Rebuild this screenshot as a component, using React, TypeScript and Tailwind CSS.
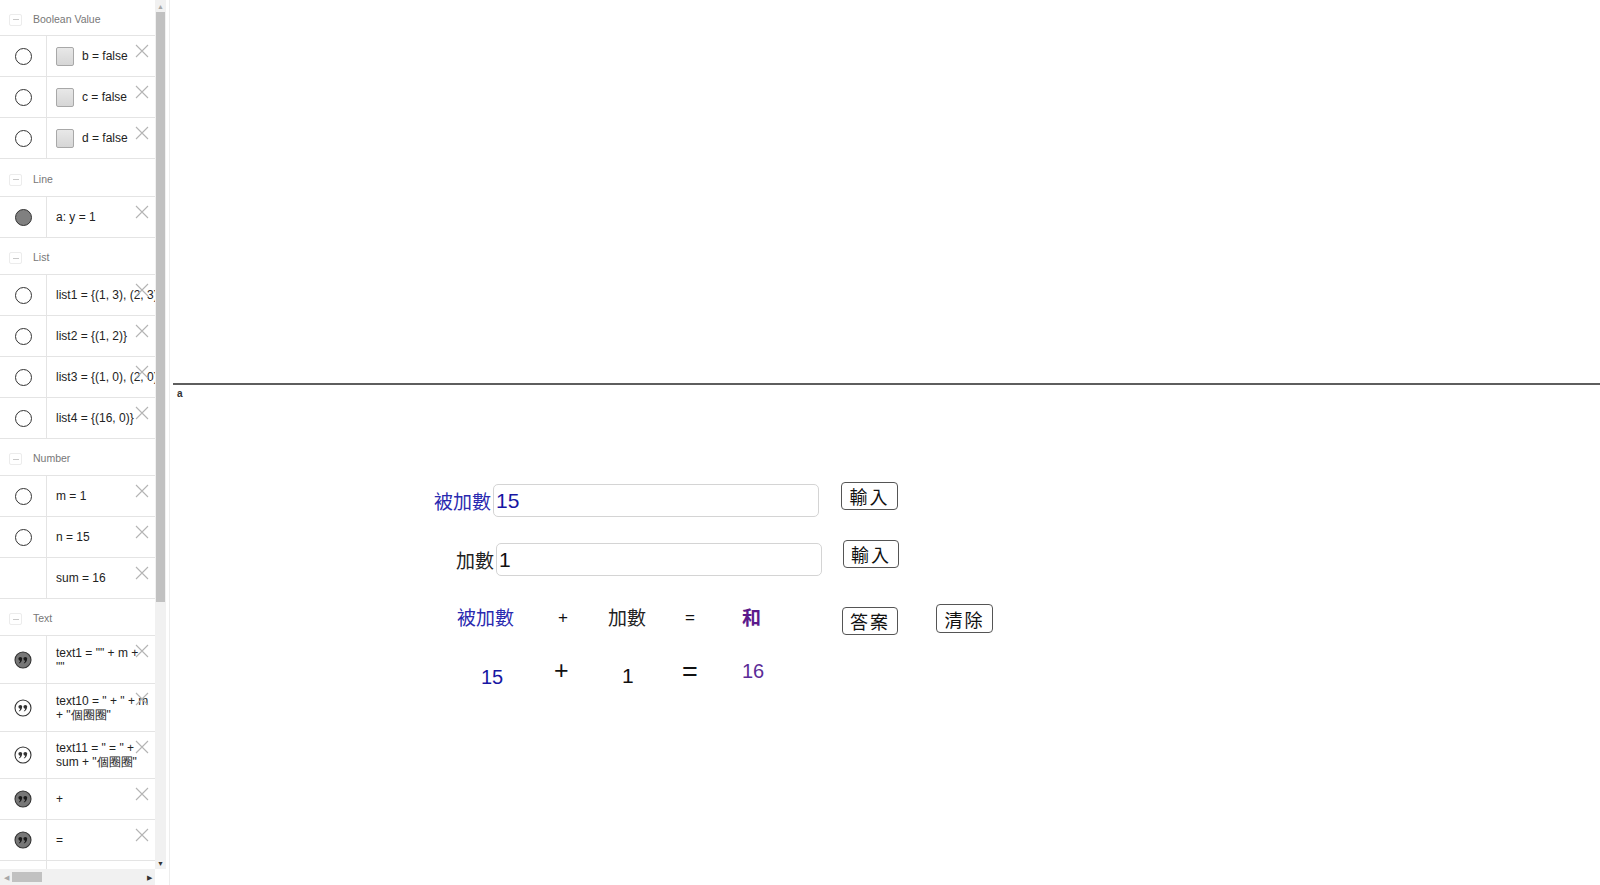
import React from "react";

type Marker = "empty" | "filled" | "none" | "quoteFilled" | "quoteOutline";

interface IItem {
  marker: Marker;
  lines: string[];
  checkbox?: boolean;
  h?: string;
}

interface ISection {
  title: string;
  h: string;
  items: IItem[];
}

const sections: ISection[] = [
  {
    title: "Boolean Value",
    h: "h-[36px]",
    items: [
      { marker: "empty", lines: ["b = false"], checkbox: true },
      { marker: "empty", lines: ["c = false"], checkbox: true },
      { marker: "empty", lines: ["d = false"], checkbox: true },
    ],
  },
  {
    title: "Line",
    h: "h-[38px]",
    items: [{ marker: "filled", lines: ["a: y = 1"] }],
  },
  {
    title: "List",
    h: "h-[37px]",
    items: [
      { marker: "empty", lines: ["list1 = {(1, 3), (2, 3), (3, 3)}"] },
      { marker: "empty", lines: ["list2 = {(1, 2)}"] },
      { marker: "empty", lines: ["list3 = {(1, 0), (2, 0)}"] },
      { marker: "empty", lines: ["list4 = {(16, 0)}"] },
    ],
  },
  {
    title: "Number",
    h: "h-[37px]",
    items: [
      { marker: "empty", lines: ["m = 1"] },
      { marker: "empty", lines: ["n = 15"] },
      { marker: "none", lines: ["sum = 16"] },
    ],
  },
  {
    title: "Text",
    h: "h-[37px]",
    items: [
      { marker: "quoteFilled", lines: ["text1 = \"\" + m + ", "\"\""], h: "h-[48px]" },
      { marker: "quoteOutline", lines: ["text10 = \" + \" + m", "+ \"個圈圈\""], h: "h-[48px]" },
      { marker: "quoteOutline", lines: ["text11 = \" = \" +", "sum + \"個圈圈\""], h: "h-[47px]" },
      { marker: "quoteFilled", lines: ["+"] },
      { marker: "quoteFilled", lines: ["="] },
      { marker: "quoteFilled", lines: [""] },
    ],
  },
];

const CloseIcon = () => (
  <svg width="14" height="14" viewBox="0 0 14 14" className="absolute right-[6px] top-[8px]">
    <path d="M1 1 L13 13 M13 1 L1 13" stroke="#b4b4b4" strokeWidth="1.1" fill="none" />
  </svg>
);

const QuoteIcon: React.FC<{ filled: boolean }> = ({ filled }) => {
  const mark = filled ? "#1a1a1a" : "#333";
  return (
    <svg width="18" height="18" viewBox="0 0 18 18">
      <circle cx="9" cy="9" r="8" fill={filled ? "#777" : "#fff"} stroke="#333" strokeWidth="1.1" />
      <circle cx="6.3" cy="7.8" r="1.9" fill={mark} />
      <path d="M7.9 8 Q8 11.2 5 12.6 L4.8 12 Q6.4 10.9 6.2 9.2 Z" fill={mark} />
      <circle cx="11.3" cy="7.8" r="1.9" fill={mark} />
      <path d="M12.9 8 Q13 11.2 10 12.6 L9.8 12 Q11.4 10.9 11.2 9.2 Z" fill={mark} />
    </svg>
  );
};

const MarkerIcon: React.FC<{ marker: Marker }> = ({ marker }) => {
  if (marker === "none") return null;
  if (marker === "quoteFilled") return <QuoteIcon filled />;
  if (marker === "quoteOutline") return <QuoteIcon filled={false} />;
  return (
    <span
      className={
        marker === "filled"
          ? "block w-[17px] h-[17px] rounded-full border border-[#333] bg-[#808080]"
          : "block w-[17px] h-[17px] rounded-full border border-[#333] bg-white"
      }
    />
  );
};

const SectionHeader: React.FC<{ title: string; h: string }> = ({ title, h }) => (
  <div className={`${h} flex items-center pt-[4px] border-b border-[#e4e4e4]`}>
    <span className="ml-[9px] w-[13px] h-[12px] border border-[#ececec] rounded-[2px] flex items-center justify-center">
      <span className="w-[6px] h-px bg-[#c8c8c8]" />
    </span>
    <span className="ml-[11px] text-[10.5px] text-[#777] whitespace-nowrap">{title}</span>
  </div>
);

const ItemRow: React.FC<{ item: IItem }> = ({ item }) => (
  <div className={`${item.h ?? "h-[41px]"} relative flex border-b border-[#e4e4e4]`}>
    <div className="w-[47px] shrink-0 flex items-center justify-center border-r border-[#e4e4e4]">
      <MarkerIcon marker={item.marker} />
    </div>
    <div className="flex-1 flex items-center pl-[9px] overflow-hidden">
      {item.checkbox && (
        <span className="w-[18px] h-[19px] mr-[8px] shrink-0 rounded-[2px] border border-[#a8a8a8] bg-gradient-to-b from-[#e8e8e8] to-[#d6d6d6]" />
      )}
      <div className="flex flex-col text-[12px] leading-[14px] text-[#222] whitespace-nowrap">
        {item.lines.map((l, i) => (
          <span key={i}>{l}</span>
        ))}
      </div>
    </div>
    <CloseIcon />
  </div>
);

const AlgebraPanel = () => (
  <aside className="w-[170px] shrink-0 h-full flex flex-col border-r border-[#ededed]">
    <div className="flex h-[869px]">
      <div className="w-[155px] h-full overflow-hidden">
        {sections.map((s) => (
          <div key={s.title}>
            <SectionHeader title={s.title} h={s.h} />
            {s.items.map((it, i) => (
              <ItemRow key={i} item={it} />
            ))}
          </div>
        ))}
      </div>
      <div className="w-[11px] h-full flex flex-col bg-[#f1f1f1]">
        <div className="h-[12px] flex items-center justify-center text-[7px] leading-none text-[#a8a8a8]">▲</div>
        <div className="h-[590px] mx-[1px] bg-[#c1c1c1]" />
        <div className="flex-1" />
        <div className="h-[12px] flex items-center justify-center text-[7px] leading-none text-[#333]">▼</div>
      </div>
    </div>
    <div className="h-[16px] flex items-center bg-[#f1f1f1] w-[155px]">
      <span className="w-[12px] text-center text-[7px] leading-none text-[#a8a8a8]">◀</span>
      <span className="w-[30px] h-[10px] bg-[#c1c1c1]" />
      <span className="flex-1" />
      <span className="w-[12px] text-center text-[7px] leading-none text-[#333]">▶</span>
    </div>
  </aside>
);

const cjk = "font-['Noto_Sans_CJK_TC','Noto_Sans_CJK_SC',sans-serif]";
const arial = "font-['Liberation_Sans',Arial,sans-serif]";

const InputBox: React.FC<{ label: string; value: string; labelColor: string; valueColor: string; className: string }> = ({
  label,
  value,
  labelColor,
  valueColor,
  className,
}) => (
  <div className={`absolute flex items-center gap-[2px] ${className}`}>
    <span className={`${cjk} text-[19px] leading-none ${labelColor}`}>{label}</span>
    <div className="w-[326px] h-[33px] rounded-[5px] border border-[#d4d4d4] bg-white flex items-center pl-[2px]">
      <span className={`${arial} text-[21px] leading-none ${valueColor}`}>{value}</span>
    </div>
  </div>
);

const GgbButton: React.FC<{ label: string; className: string }> = ({ label, className }) => (
  <button
    className={`absolute h-[28px] rounded-[4px] border border-[#555] bg-white flex items-center justify-center ${cjk} text-[18px] leading-none text-[#111] tracking-[2px] ${className}`}
  >
    {label}
  </button>
);

const GraphicsView = () => (
  <main className="relative flex-1 h-full overflow-hidden bg-white">
    <div className="absolute left-[3px] right-0 top-[383px] h-[2px] bg-[#5e5e5e]" />
    <span className={`absolute left-[7px] top-[386px] ${arial} text-[10px] font-bold text-[#333]`}>a</span>

    <InputBox label="被加數" value="15" labelColor="text-[#2a2ab0]" valueColor="text-[#1717a3]" className="left-[264px] top-[484px]" />
    <InputBox label="加數" value="1" labelColor="text-[#222]" valueColor="text-[#111]" className="left-[286px] top-[543px]" />

    <GgbButton label="輸入" className="left-[671px] top-[482px] w-[57px]" />
    <GgbButton label="輸入" className="left-[673px] top-[540px] w-[56px]" />
    <GgbButton label="答案" className="left-[672px] top-[607px] w-[56px]" />
    <GgbButton label="清除" className="left-[766px] top-[604px] w-[57px] h-[29px]" />

    <span className={`absolute left-[287px] top-[607px] ${cjk} text-[19px] leading-none text-[#2a2ab0]`}>被加數</span>
    <span className={`absolute left-[388px] top-[609px] ${arial} text-[17px] leading-none text-[#111]`}>+</span>
    <span className={`absolute left-[438px] top-[607px] ${cjk} text-[19px] leading-none text-[#222]`}>加數</span>
    <span className={`absolute left-[515px] top-[609px] ${arial} text-[17px] leading-none text-[#111]`}>=</span>
    <span className={`absolute left-[572px] top-[607px] ${cjk} text-[19px] leading-none font-bold text-[#5c1a8c]`}>和</span>

    <span className={`absolute left-[311px] top-[667px] ${arial} text-[20px] leading-none text-[#1717a3]`}>15</span>
    <span className={`absolute left-[384px] top-[658px] ${arial} text-[25px] leading-none text-[#111]`}>+</span>
    <span className={`absolute left-[452px] top-[665px] ${arial} text-[21px] leading-none text-[#111]`}>1</span>
    <span className={`absolute left-[512px] top-[659px] ${arial} text-[27px] leading-none text-[#111]`}>=</span>
    <span className={`absolute left-[572px] top-[661px] ${arial} text-[20px] leading-none text-[#5b2c97]`}>16</span>
  </main>
);

const App: React.FC = () => {
  return (
    <div className={`w-[1600px] h-[885px] flex overflow-hidden bg-white ${arial}`}>
      <AlgebraPanel />
      <GraphicsView />
    </div>
  );
};

export default App;
